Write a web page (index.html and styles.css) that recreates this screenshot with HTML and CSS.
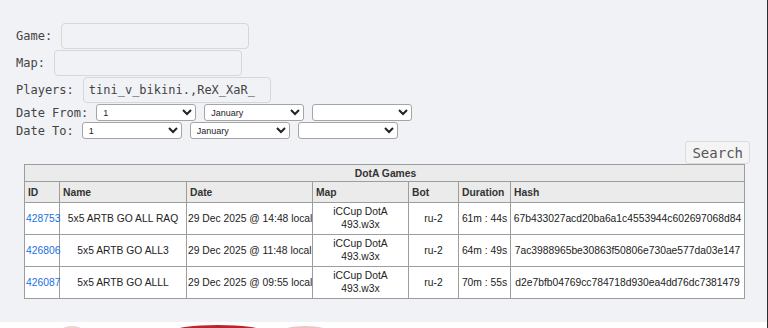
FILE: index.html
```
<!DOCTYPE html>
<html lang="en">
  <head>
    <meta charset="UTF-8" />
    <meta name="viewport" content="width=device-width, initial-scale=1.0" />
    <title>DotA Games</title>
    <link rel="stylesheet" href="styles.css">
  </head>
  <body>
    <div class="page">
      <form class="search-form">
        <div class="row">
          <label class="lbl">Game:</label>
          <input type="text" class="field" />
        </div>
        <div class="row">
          <label class="lbl">Map:</label>
          <input type="text" class="field" />
        </div>
        <div class="row">
          <label class="lbl">Players:</label>
          <input type="text" class="field" value="tini_v_bikini.,ReX_XaR_" />
        </div>
        <div class="row date-row">
          <label class="lbl">Date From:</label>
          <select class="sel"><option>1</option></select>
          <select class="sel"><option>January</option></select>
          <select class="sel"><option></option></select>
        </div>
        <div class="row date-row">
          <label class="lbl">Date To:</label>
          <select class="sel"><option>1</option></select>
          <select class="sel"><option>January</option></select>
          <select class="sel"><option></option></select>
        </div>
        <div class="actions">
          <button type="button" class="search-btn">Search</button>
        </div>
      </form>

      <table class="games">
        <colgroup>
          <col class="c-id" />
          <col class="c-name" />
          <col class="c-date" />
          <col class="c-map" />
          <col class="c-bot" />
          <col class="c-dur" />
          <col class="c-hash" />
        </colgroup>
        <thead>
          <tr>
            <th colspan="7" class="caption">DotA Games</th>
          </tr>
          <tr>
            <th>ID</th>
            <th>Name</th>
            <th>Date</th>
            <th>Map</th>
            <th>Bot</th>
            <th>Duration</th>
            <th>Hash</th>
          </tr>
        </thead>
        <tbody>
          <tr>
            <td class="id"><a href="#">428753</a></td>
            <td>5x5 ARTB GO ALL RAQ</td>
            <td>29 Dec 2025 @ 14:48 local</td>
            <td class="map">iCCup DotA 493.w3x</td>
            <td>ru-2</td>
            <td>61m : 44s</td>
            <td>67b433027acd20ba6a1c4553944c602697068d84</td>
          </tr>
          <tr>
            <td class="id"><a href="#">426806</a></td>
            <td>5x5 ARTB GO ALL3</td>
            <td>29 Dec 2025 @ 11:48 local</td>
            <td class="map">iCCup DotA 493.w3x</td>
            <td>ru-2</td>
            <td>64m : 49s</td>
            <td>7ac3988965be30863f50806e730ae577da03e147</td>
          </tr>
          <tr>
            <td class="id"><a href="#">426087</a></td>
            <td>5x5 ARTB GO ALLL</td>
            <td>29 Dec 2025 @ 09:55 local</td>
            <td class="map">iCCup DotA 493.w3x</td>
            <td>ru-2</td>
            <td>70m : 55s</td>
            <td>d2e7bfb04769cc784718d930ea4dd76dc7381479</td>
          </tr>
        </tbody>
      </table>

      <div class="footer">
        <svg class="banner" width="768" height="6" viewBox="0 0 768 6">
          <ellipse cx="72" cy="10" rx="12" ry="6" fill="#efcfd0" />
          <ellipse cx="218" cy="9" rx="44" ry="6" fill="#b8262b" />
          <ellipse cx="305" cy="10" rx="24" ry="6" fill="#ebc3c4" />
        </svg>
      </div>
    </div>
  </body>
</html>
```

FILE: styles.css
```
html,
body {
  margin: 0;
  padding: 0;
}
body {
  background: #f1f2f6;
  font-family: "Liberation Sans", Arial, sans-serif;
  color: #222;
}
.page {
  min-height: 328px;
  border-right: 1px solid #2e2e2e;
  box-sizing: border-box;
  display: flex;
  flex-direction: column;
}
.search-form {
  padding: 23px 17px 0 16px;
  display: flex;
  flex-direction: column;
  gap: 1px;
}
.row {
  display: flex;
  align-items: center;
  gap: 9px;
  height: 26px;
}
.date-row {
  height: 17px;
  gap: 8px;
}
.lbl {
  font-family: "DejaVu Sans Mono", monospace;
  font-size: 12px;
  color: #444;
}
.field {
  width: 188px;
  height: 26px;
  box-sizing: border-box;
  margin: 0;
  padding: 0 5px;
  background: #f1f2f6;
  border: 1px solid #d6d7da;
  border-radius: 4px;
  font-family: "DejaVu Sans Mono", monospace;
  font-size: 12px;
  color: #444;
}
.sel {
  width: 100px;
  height: 17px;
  box-sizing: border-box;
  margin: 0;
  padding: 0 2px;
  background: #fff;
  border: 1px solid #a5a5a5;
  border-radius: 3px;
  font-family: "Liberation Sans", Arial, sans-serif;
  font-size: 9px;
  color: #222;
}
.actions {
  display: flex;
  justify-content: flex-end;
  margin-top: 1px;
}
.search-btn {
  height: 23px;
  padding: 0 6px;
  background: #f4f4f5;
  border: 1px solid #dcdcdc;
  border-radius: 3px;
  font-family: "DejaVu Sans Mono", monospace;
  font-size: 14px;
  color: #555;
}
.games {
  margin-left: 24px;
  width: 720px;
  table-layout: fixed;
  border-collapse: collapse;
  font-size: 10.3px;
  background: #fff;
}
.games th,
.games td {
  border: 1px solid #9d9d9d;
  padding: 0 1px;
  line-height: 13px;
}
.games th {
  background: #ebebeb;
  text-align: left;
  padding-left: 3px;
  height: 20px;
  color: #333;
}
.games th.caption {
  text-align: center;
  height: 16px;
}
.games td {
  text-align: center;
  height: 30px;
  white-space: nowrap;
}
.games td.map {
  white-space: normal;
  vertical-align: top;
  padding-top: 2px;
  height: 29px;
}
.games td.id {
  text-align: left;
  padding: 0 0 0 1px;
}
.games a {
  color: #1a6fe0;
  text-decoration: none;
}
.c-id { width: 35px; }
.c-name { width: 127px; }
.c-date { width: 126px; }
.c-map { width: 96px; }
.c-bot { width: 50px; }
.c-dur { width: 52px; }
.c-hash { width: 234px; }
.footer {
  margin-top: auto;
  height: 6px;
  background: #fff;
  overflow: hidden;
}
.banner {
  display: block;
}
```
